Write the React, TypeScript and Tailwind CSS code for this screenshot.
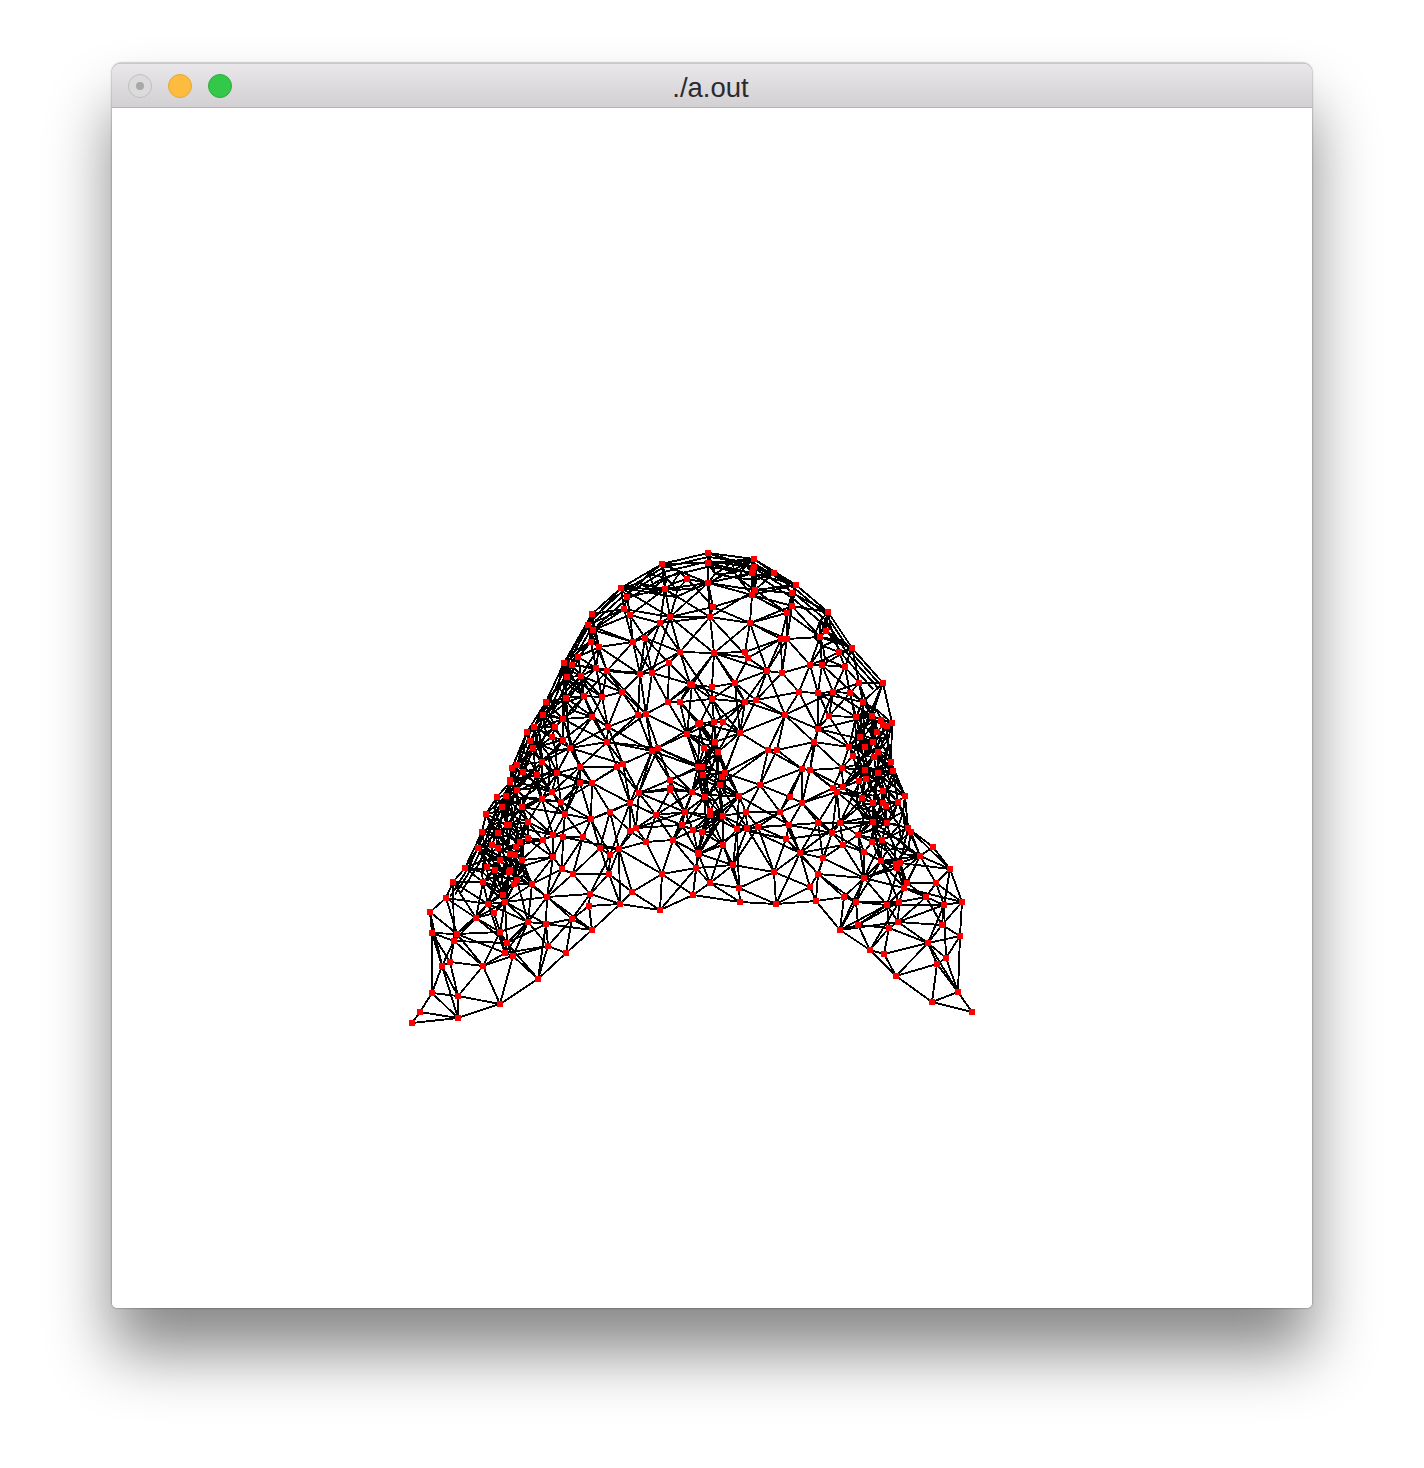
import React, { useMemo } from "react";

type P = [number, number];

const POINTS: P[] = [
[662,564],[621,588],[627,597],[665,589],[624,609],[630,615],[592,614],[588,625],[593,630],[660,623],[670,617],[591,642],[599,647],[633,642],[645,638],[680,652],[564,663],[572,665],[596,668],[607,671],[669,663],[640,674],[652,673],[567,677],[581,676],[690,684],[546,702],[566,698],[584,696],[602,697],[622,692],[668,702],[680,702],[543,715],[563,719],[592,717],[638,715],[646,714],[698,724],[534,727],[527,732],[555,727],[608,727],[687,734],[563,740],[570,748],[607,742],[533,748],[652,751],[658,748],[517,765],[542,762],[580,767],[617,767],[623,764],[512,768],[537,775],[557,773],[510,780],[580,783],[592,783],[670,780],[670,788],[698,767],
[708,553],[708,563],[754,559],[754,567],[752,573],[708,583],[796,585],[792,593],[755,590],[752,595],[713,607],[710,617],[792,606],[787,613],[828,612],[750,623],[826,631],[820,637],[787,639],[781,639],[852,648],[714,653],[745,652],[748,658],[845,667],[810,665],[822,665],[767,671],[782,673],[883,683],[859,683],[712,687],[735,683],[692,685],[799,692],[818,693],[833,692],[850,693],[712,699],[745,702],[756,700],[863,702],[785,715],[829,716],[856,717],[872,716],[892,723],[700,723],[714,722],[723,722],[740,733],[818,729],[814,742],[860,737],[873,742],[849,747],[715,742],[718,752],[777,750],[768,750],[878,752],[891,762],[893,771],[702,767],[725,773],[802,769],[810,770],[842,768],[865,770],[878,773],[760,785],[720,785],[843,787],[833,788],[703,775],
[412,1023],[420,1012],[458,1018],[500,1004],[432,993],[458,996],[538,979],[483,966],[442,966],[450,962],[513,956],[505,953],[507,943],[566,953],[548,946],[592,930],[432,933],[457,934],[454,941],[500,932],[528,922],[546,924],[572,919],[430,912],[476,918],[494,913],[488,904],[505,902],[503,895],[446,898],[453,882],[589,906],[590,894],[620,904],[632,892],[660,910],[693,895],[662,874],[696,868],[547,897],[573,874],[609,874],[562,869],[532,884],[517,880],[483,882],[465,868],[610,855],[619,849],[646,842],[673,840],[698,853],[600,848],[522,860],[553,857],[478,848],[520,842],[553,835],[583,837],[543,840],[563,837],[482,832],[498,833],[636,828],[630,831],[591,819],[507,825],[528,822],[486,814],[565,814],[610,812],[656,815],[682,825],[693,830],[630,803],[685,812],[542,799],[561,802],[522,807],[497,797],[506,796],[639,793],[670,790],[692,792],[552,792],[510,782],[500,860],[510,870],[495,870],[515,855],
[972,1012],[932,1002],[958,992],[896,976],[937,964],[946,958],[870,950],[884,954],[928,943],[960,936],[942,925],[840,930],[858,925],[889,928],[898,922],[856,902],[816,901],[776,904],[740,902],[810,887],[774,872],[739,888],[733,865],[699,854],[710,883],[844,897],[887,905],[899,902],[926,897],[944,905],[962,902],[936,883],[950,869],[904,888],[907,883],[864,878],[818,874],[823,858],[800,853],[786,839],[864,852],[843,845],[881,861],[897,868],[900,863],[920,856],[933,847],[908,828],[832,833],[818,823],[840,823],[789,825],[758,827],[747,828],[737,829],[702,832],[723,816],[710,815],[746,812],[780,812],[802,803],[790,797],[705,797],[739,796],[862,798],[898,802],[905,796],[872,842],[882,840],[723,845],[883,803],[858,835],[837,792],[873,803],[887,823],[873,822],
];

const OUTLINE: P[] = [
[412,1023],[420,1012],[432,993],[430,912],[446,898],[465,868],[482,832],[510,780],[527,732],[546,702],[564,663],[592,614],[621,588],[662,564],[708,553],[754,559],[796,585],[828,612],[852,648],[883,683],[892,723],[891,762],[905,796],[908,828],[933,847],[950,869],[962,902],[960,936],[958,992],[972,1012],[932,1002],[896,976],[870,950],[840,930],[816,901],[776,904],[740,902],[693,895],[660,910],[620,904],[592,930],[566,953],[538,979],[500,1004],[458,1018],
];

// Top ridge of the shape, drawn again further in: the back of the mesh shows through there.
const RIDGE: P[] = OUTLINE.slice(4, 20);

// Parts of the mesh where many layers overlap: [cx, cy, rx, ry, count of extra vertices]
const DENSE: [number, number, number, number, number][] = [
  [506, 825, 24, 50, 46],
  [504, 866, 24, 24, 34],
  [538, 745, 20, 50, 26],
  [570, 672, 14, 42, 12],
  [874, 770, 22, 62, 60],
  [868, 730, 16, 26, 14],
  [898, 840, 14, 36, 14],
  [712, 785, 13, 50, 22],
  [664, 584, 40, 14, 12],
  [745, 570, 40, 12, 14],
  [830, 640, 22, 22, 8],
];

function extraPoints(): P[] {
  const out: P[] = [];
  for (const [cx, cy, rx, ry, count] of DENSE) {
    for (let i = 0; i < count; i++) {
      const r = Math.sqrt((i + 0.5) / count);
      const a = i * 2.39996;
      const x = Math.round(cx + rx * r * Math.cos(a));
      const y = Math.round(cy + ry * r * Math.sin(a));
      if (inside(x, y)) out.push([x, y]);
    }
  }
  return out;
}

function inside(x: number, y: number) {
  let c = false;
  for (let i = 0, j = OUTLINE.length - 1; i < OUTLINE.length; j = i++) {
    const [xi, yi] = OUTLINE[i];
    const [xj, yj] = OUTLINE[j];
    if (yi > y !== yj > y && x < ((xj - xi) * (y - yi)) / (yj - yi) + xi) c = !c;
  }
  return c;
}

function delaunay(pts: P[]): [number, number, number][] {
  const all: P[] = [...pts, [-5000, -5000], [7000, -5000], [1000, 8000]];
  const n = pts.length;
  let tris: [number, number, number][] = [[n, n + 1, n + 2]];
  pts.forEach((p, idx) => {
    const bad: [number, number, number][] = [];
    const keep: [number, number, number][] = [];
    for (const t of tris) {
      const [a, b, c] = t.map((i) => all[i]);
      const ax = a[0] - p[0], ay = a[1] - p[1];
      const bx = b[0] - p[0], by = b[1] - p[1];
      const cx = c[0] - p[0], cy = c[1] - p[1];
      const det =
        (ax * ax + ay * ay) * (bx * cy - cx * by) -
        (bx * bx + by * by) * (ax * cy - cx * ay) +
        (cx * cx + cy * cy) * (ax * by - bx * ay);
      const orient = (b[0] - a[0]) * (c[1] - a[1]) - (b[1] - a[1]) * (c[0] - a[0]);
      if (orient > 0 ? det > 0 : det < 0) bad.push(t);
      else keep.push(t);
    }
    const count = new Map<string, [number, number, number]>();
    for (const t of bad) {
      for (const [u, v] of [[t[0], t[1]], [t[1], t[2]], [t[2], t[0]]]) {
        const k = u < v ? `${u}_${v}` : `${v}_${u}`;
        const cur = count.get(k);
        count.set(k, [u, v, cur ? cur[2] + 1 : 1]);
      }
    }
    for (const [u, v, ct] of count.values()) {
      if (ct === 1) keep.push([u, v, idx]);
    }
    tris = keep;
  });
  return tris.filter((t) => t.every((i) => i < n));
}

function edgesOf(pts: P[], maxLen: number): [P, P][] {
  const seen = new Set<string>();
  const out: [P, P][] = [];
  for (const t of delaunay(pts)) {
    const [a, b, c] = t.map((i) => pts[i]);
    if (!inside((a[0] + b[0] + c[0]) / 3, (a[1] + b[1] + c[1]) / 3)) continue;
    for (const [u, v] of [[t[0], t[1]], [t[1], t[2]], [t[2], t[0]]]) {
      const k = u < v ? `${u}_${v}` : `${v}_${u}`;
      if (seen.has(k)) continue;
      seen.add(k);
      const p = pts[u], q = pts[v];
      if (Math.hypot(p[0] - q[0], p[1] - q[1]) <= maxLen) out.push([p, q]);
    }
  }
  return out;
}

function ridgeEdges(): [P, P][] {
  const out: [P, P][] = [];
  for (const f of [0.016, 0.034, 0.056]) {
    const shifted = RIDGE.map(([x, y]): P => [x + (710 - x) * f, y + (800 - y) * f]);
    for (let i = 0; i + 1 < shifted.length; i++) out.push([shifted[i], shifted[i + 1]]);
  }
  return out;
}

function Mesh() {
  const { lines, dots } = useMemo(() => {
    const extra = extraPoints();
    const a = edgesOf(POINTS, 70);
    const b = edgesOf(POINTS.filter((_, i) => i % 3 === 0), 60);
    const c = edgesOf(POINTS.filter((_, i) => i % 3 === 1), 60);
    const d = edgesOf([...POINTS, ...extra], 26);
    return { lines: [...a, ...b, ...c, ...d, ...ridgeEdges()], dots: [...POINTS, ...extra.filter((_, i) => i % 7 === 0)] };
  }, []);
  return (
    <svg width="1200" height="1200" viewBox="112 108 1200 1200" className="block" shapeRendering="crispEdges">
      <g stroke="#000" strokeWidth="1.9">
        {lines.map(([p, q], i) => (
          <line key={i} x1={p[0]} y1={p[1]} x2={q[0]} y2={q[1]} />
        ))}
      </g>
      <g fill="#ff0000">
        {dots.map(([x, y], i) => (
          <rect key={i} x={x - 3} y={y - 3} width="6" height="6" />
        ))}
      </g>
    </svg>
  );
}

export default function App() {
  return (
    <div className="w-[1424px] h-[1468px] bg-white overflow-hidden pl-[112px] pt-[63px]">
      <div className="w-[1200px] h-[1245px] flex flex-col bg-white rounded-t-[9px] rounded-b-[5px] overflow-hidden shadow-[0_44px_64px_rgba(0,0,0,0.47),0_0_2px_rgba(0,0,0,0.6)] border-t border-[#c9c8c9]">
        <div className="relative h-[44px] shrink-0 flex items-center bg-gradient-to-b from-[#e9e7e9] to-[#d2d0d3] border-b border-[#b5b4b5] pl-4 gap-4">
          <div className="w-6 h-6 rounded-full bg-[#dcdbdc] border border-[#c0bfc0] flex items-center justify-center">
            <div className="w-2 h-2 rounded-full bg-[#a9a8a9]" />
          </div>
          <div className="w-6 h-6 rounded-full bg-[#fdbc40] border border-[#e5a733]" />
          <div className="w-6 h-6 rounded-full bg-[#34c84a] border border-[#2aac3a]" />
          <span className="absolute inset-0 flex items-center justify-center text-[27.5px] leading-none pt-[4px] pr-[3px] text-[#2c2a2e] font-['Liberation_Sans',Arial,sans-serif]">
            ./a.out
          </span>
        </div>
        <div className="flex-1 bg-white">
          <Mesh />
        </div>
      </div>
    </div>
  );
}
